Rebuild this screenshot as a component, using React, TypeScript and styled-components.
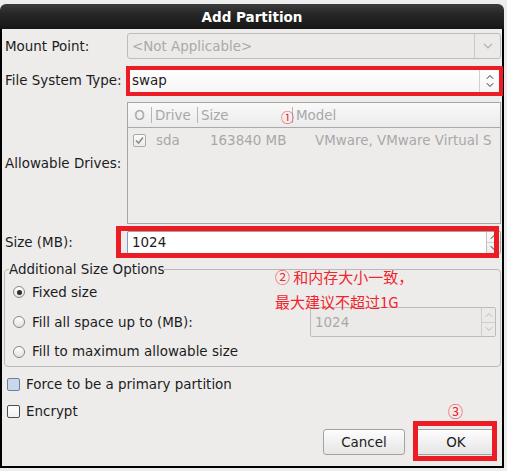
import React from "react";
import styled, { createGlobalStyle } from "styled-components";

const RED = "#ec1c24";
const NOTE_RED = "#f2242b";

const GlobalStyle = createGlobalStyle`
  html, body { margin: 0; padding: 0; background: #ededed; }
  body {
    font-family: "DejaVu Sans", "Noto Sans CJK SC", sans-serif;
    font-size: 13.45px;
    color: #1c1c1c;
  }
  * { box-sizing: border-box; }
`;

const Window = styled.div`
  width: 504px;
  margin-top: 4px;
`;

const TitleBar = styled.div`
  height: 25px;
  border-radius: 6px 6px 0 0;
  background: linear-gradient(to bottom, #3d3d3d 0%, #262626 40%, #161616 100%);
  color: #ffffff;
  font-weight: bold;
  font-size: 13.5px;
  display: flex;
  align-items: center;
  justify-content: center;
  padding-top: 1px;
`;

const Body = styled.div`
  background: #edeceb;
  border: 2px solid #000;
  border-top: 0;
  padding: 0 1px 11px 2px;
  display: flex;
  flex-direction: column;
`;

const FormRow = styled.div<{ $mt: number; $h: number }>`
  display: grid;
  grid-template-columns: 123px 1fr;
  align-items: center;
  margin-top: ${(p) => p.$mt}px;
  height: ${(p) => p.$h}px;
`;

const Label = styled.div`
  padding-left: 1px;
  white-space: nowrap;
`;

const Field = styled.div`
  position: relative;
  height: 100%;
`;

const RedBox = styled.div<{ $t: number; $r: number; $b: number; $l: number; $w: number }>`
  position: absolute;
  top: ${(p) => p.$t}px;
  right: ${(p) => p.$r}px;
  bottom: ${(p) => p.$b}px;
  left: ${(p) => p.$l}px;
  border: ${(p) => p.$w}px solid ${RED};
  pointer-events: none;
`;

const Note = styled.div<{ $top: number; $left: number; $size: number; $lh: number }>`
  position: absolute;
  top: ${(p) => p.$top}px;
  left: ${(p) => p.$left}px;
  font-family: "Noto Sans CJK SC", sans-serif;
  font-size: ${(p) => p.$size}px;
  line-height: ${(p) => p.$lh}px;
  color: ${NOTE_RED};
  white-space: nowrap;
  pointer-events: none;
`;

/* ---------- combo boxes ---------- */

const Combo = styled.div<{ $disabled?: boolean }>`
  height: 100%;
  display: flex;
  border: 1px solid ${(p) => (p.$disabled ? "#bdbcba" : "#a6a5a3")};
  border-radius: 3px;
  background: ${(p) => (p.$disabled ? "#ebeae8" : "linear-gradient(#ffffff, #f6f6f6)")};
  color: ${(p) => (p.$disabled ? "#a9a9a9" : "#1c1c1c")};
`;

const ComboText = styled.div`
  flex: 1;
  display: flex;
  align-items: center;
  padding-left: 4px;
`;

const ComboButton = styled.div<{ $w: number; $sep: string }>`
  width: ${(p) => p.$w}px;
  border-left: 1px solid ${(p) => p.$sep};
  display: flex;
  flex-direction: column;
  align-items: center;
  justify-content: center;
  gap: 2px;
`;

/* ---------- tree view ---------- */

const Tree = styled.div`
  position: relative;
  height: 100%;
  border: 1px solid #a6a5a3;
  background: #edeceb;
  overflow: hidden;
`;

const TreeHeader = styled.div`
  display: grid;
  grid-template-columns: 23px 46px 95px 1fr;
  height: 25px;
  border-bottom: 1px solid #a9a9a9;
  background: linear-gradient(#f9f9f9, #ebebeb);
  color: #a8a8a8;
`;

const HeaderCell = styled.div<{ $sep?: boolean; $center?: boolean }>`
  position: relative;
  display: flex;
  align-items: center;
  justify-content: ${(p) => (p.$center ? "center" : "flex-start")};
  padding-left: ${(p) => (p.$center ? 0 : 4)}px;
  &::before {
    content: "";
    display: ${(p) => (p.$sep ? "block" : "none")};
    position: absolute;
    left: 0;
    top: 4px;
    bottom: 4px;
    width: 1px;
    background: #b6b6b6;
  }
`;

const TreeRow = styled.div`
  display: grid;
  grid-template-columns: 23px 46px 95px 1fr;
  height: 24px;
  align-items: center;
  color: #a8a8a8;
  white-space: nowrap;
`;

const Cell = styled.div<{ $pl: number; $center?: boolean }>`
  padding-left: ${(p) => p.$pl}px;
  display: flex;
  justify-content: ${(p) => (p.$center ? "center" : "flex-start")};
  overflow: hidden;
`;

const TreeCheck = styled.span`
  width: 13px;
  height: 13px;
  border: 1px solid #a9a9a9;
  border-radius: 2px;
  background: linear-gradient(#fafafa, #ececec);
  display: inline-flex;
  align-items: center;
  justify-content: center;
`;

/* ---------- spin entries ---------- */

const SpinEntry = styled.div<{ $disabled?: boolean; $focus?: boolean; $w?: number }>`
  height: 100%;
  width: ${(p) => (p.$w ? `${p.$w}px` : "auto")};
  display: flex;
  border: 1px solid ${(p) => (p.$disabled ? "#bdbcba" : "#a3a2a0")};
  border-left-color: ${(p) => (p.$focus ? "#7d9dcc" : p.$disabled ? "#bdbcba" : "#a3a2a0")};
  border-radius: 2px;
  background: ${(p) => (p.$disabled ? "#ebeae8" : "#ffffff")};
  color: ${(p) => (p.$disabled ? "#a9a9a9" : "#1c1c1c")};
`;

const SpinText = styled.div`
  flex: 1;
  display: flex;
  align-items: center;
  padding-left: 4px;
`;

const SpinButtons = styled.div<{ $disabled?: boolean }>`
  width: 14px;
  display: flex;
  flex-direction: column;
  border-left: 1px solid ${(p) => (p.$disabled ? "#cfcecc" : "#c3c2c0")};
  background: ${(p) => (p.$disabled ? "#ebeae8" : "linear-gradient(#fbfbfb, #ececec)")};
`;

const SpinHalf = styled.div<{ $top?: boolean }>`
  flex: 1;
  display: flex;
  align-items: center;
  justify-content: center;
  border-bottom: ${(p) => (p.$top ? "1px solid #cfcecc" : "0")};
`;

/* ---------- size options frame ---------- */

const FrameWrap = styled.div`
  position: relative;
  margin-top: 8px;
`;

const Frame = styled.fieldset`
  margin: 0;
  padding: 0 4px 0 4px;
  border: 1px solid #bab9b7;
  border-radius: 4px;
  min-width: 0;
`;

const Legend = styled.legend`
  padding: 0;
  line-height: 15px;
`;

const OptionRow = styled.div<{ $h: number }>`
  height: ${(p) => p.$h}px;
  display: flex;
  align-items: center;
  justify-content: space-between;
  padding-left: 4px;
`;

const OptionLabel = styled.label`
  display: flex;
  align-items: center;
  gap: 7px;
  white-space: nowrap;
`;

const Radio = styled.span<{ $checked?: boolean }>`
  width: 12px;
  height: 12px;
  border-radius: 50%;
  border: 1px solid #858585;
  background: linear-gradient(#ffffff, #e2e2e2);
  display: inline-flex;
  align-items: center;
  justify-content: center;
  flex: none;
  &::after {
    content: "";
    display: ${(p) => (p.$checked ? "block" : "none")};
    width: 5px;
    height: 5px;
    border-radius: 50%;
    background: #2e2e2e;
  }
`;

/* ---------- check rows ---------- */

const CheckRow = styled.label<{ $mt: number }>`
  margin-top: ${(p) => p.$mt}px;
  height: 20px;
  display: flex;
  align-items: center;
  gap: 6px;
  padding-left: 3px;
`;

const CheckBox = styled.span<{ $tint?: boolean }>`
  width: 13px;
  height: 13px;
  border-radius: 2px;
  border: 1px solid ${(p) => (p.$tint ? "#6e7f9b" : "#4e4e4e")};
  background: ${(p) => (p.$tint ? "#c7d7ec" : "linear-gradient(#ffffff, #f1f1f1)")};
  flex: none;
`;

/* ---------- buttons ---------- */

const ButtonRow = styled.div`
  margin-top: 8px;
  display: flex;
  justify-content: flex-end;
  gap: 10px;
  padding-right: 4px;
`;

const ButtonSlot = styled.div`
  position: relative;
`;

const Button = styled.button`
  width: 82px;
  height: 26px;
  border: 1px solid #a2a2a2;
  border-radius: 3px;
  background: linear-gradient(#fdfdfd, #e5e5e5);
  font: inherit;
  color: #1c1c1c;
  padding: 0;
  display: flex;
  align-items: center;
  justify-content: center;
`;

/* ---------- icons ---------- */

const ChevronDown: React.FC<{ color: string; w?: number }> = ({ color, w = 10 }) => (
  <svg width={w} height={6} viewBox="0 0 10 6">
    <path d="M1 0.8 L5 4.8 L9 0.8" fill="none" stroke={color} strokeWidth={1.2} />
  </svg>
);

const ChevronUp: React.FC<{ color: string; w?: number }> = ({ color, w = 10 }) => (
  <svg width={w} height={6} viewBox="0 0 10 6">
    <path d="M1 5.2 L5 1.2 L9 5.2" fill="none" stroke={color} strokeWidth={1.2} />
  </svg>
);

const CheckMark = () => (
  <svg width={9} height={9} viewBox="0 0 9 9">
    <path d="M1 4.5 L3.5 7 L8 1.5" fill="none" stroke="#8c8c8c" strokeWidth={1.6} />
  </svg>
);

export default function App() {
  return (
    <>
      <GlobalStyle />
      <Window>
        <TitleBar>Add Partition</TitleBar>
        <Body>
          <FormRow $mt={4} $h={26}>
            <Label>Mount Point:</Label>
            <Field>
              <Combo $disabled>
                <ComboText>&lt;Not Applicable&gt;</ComboText>
                <ComboButton $w={26} $sep="#cac9c7">
                  <ChevronDown color="#acacac" />
                </ComboButton>
              </Combo>
            </Field>
          </FormRow>

          <FormRow $mt={8} $h={27}>
            <Label>File System Type:</Label>
            <Field>
              <Combo>
                <ComboText>swap</ComboText>
                <ComboButton $w={21} $sep="#d0d0d0">
                  <ChevronUp color="#2a2a2a" w={8} />
                  <ChevronDown color="#2a2a2a" w={8} />
                </ComboButton>
              </Combo>
              <RedBox $t={-1} $r={-2} $b={-2} $l={-1} $w={4} />
            </Field>
          </FormRow>

          <FormRow $mt={8} $h={122}>
            <Label>Allowable Drives:</Label>
            <Field>
              <Tree>
                <TreeHeader>
                  <HeaderCell $center>O</HeaderCell>
                  <HeaderCell $sep>Drive</HeaderCell>
                  <HeaderCell $sep>Size</HeaderCell>
                  <HeaderCell $sep>Model</HeaderCell>
                </TreeHeader>
                <TreeRow>
                  <Cell $pl={0} $center>
                    <TreeCheck>
                      <CheckMark />
                    </TreeCheck>
                  </Cell>
                  <Cell $pl={5}>sda</Cell>
                  <Cell $pl={13}>163840 MB</Cell>
                  <Cell $pl={23}>VMware, VMware Virtual S</Cell>
                </TreeRow>
                <Note $top={7} $left={153} $size={13} $lh={13}>
                  ①
                </Note>
              </Tree>
            </Field>
          </FormRow>

          <FormRow $mt={7} $h={23}>
            <Label>Size (MB):</Label>
            <Field>
              <SpinEntry $focus>
                <SpinText>1024</SpinText>
                <SpinButtons>
                  <SpinHalf $top>
                    <ChevronUp color="#2a2a2a" w={8} />
                  </SpinHalf>
                  <SpinHalf>
                    <ChevronDown color="#2a2a2a" w={8} />
                  </SpinHalf>
                </SpinButtons>
              </SpinEntry>
              <RedBox $t={-5} $r={2} $b={-4} $l={-11} $w={5} />
            </Field>
          </FormRow>

          <FrameWrap>
            <Frame>
              <Legend>Additional Size Options</Legend>
              <OptionRow $h={30}>
                <OptionLabel>
                  <Radio $checked />
                  Fixed size
                </OptionLabel>
              </OptionRow>
              <OptionRow $h={30}>
                <OptionLabel>
                  <Radio />
                  Fill all space up to (MB):
                </OptionLabel>
                <SpinEntry $disabled $w={186}>
                  <SpinText>1024</SpinText>
                  <SpinButtons $disabled>
                    <SpinHalf $top>
                      <ChevronUp color="#b8b8b8" w={8} />
                    </SpinHalf>
                    <SpinHalf>
                      <ChevronDown color="#b8b8b8" w={8} />
                    </SpinHalf>
                  </SpinButtons>
                </SpinEntry>
              </OptionRow>
              <OptionRow $h={29}>
                <OptionLabel>
                  <Radio />
                  Fill to maximum allowable size
                </OptionLabel>
              </OptionRow>
            </Frame>
            <Note $top={2} $left={271} $size={15} $lh={25}>
              ② 和内存大小一致，
              <br />
              最大建议不超过1G
            </Note>
          </FrameWrap>

          <CheckRow $mt={7}>
            <CheckBox $tint />
            Force to be a primary partition
          </CheckRow>
          <CheckRow $mt={7}>
            <CheckBox />
            Encrypt
          </CheckRow>

          <ButtonRow>
            <ButtonSlot>
              <Button>Cancel</Button>
            </ButtonSlot>
            <ButtonSlot>
              <Button>OK</Button>
              <RedBox $t={-8} $r={0} $b={-6} $l={-2} $w={5} />
              <Note $top={-27} $left={33} $size={15} $lh={17}>
                ③
              </Note>
            </ButtonSlot>
          </ButtonRow>
        </Body>
      </Window>
    </>
  );
}
